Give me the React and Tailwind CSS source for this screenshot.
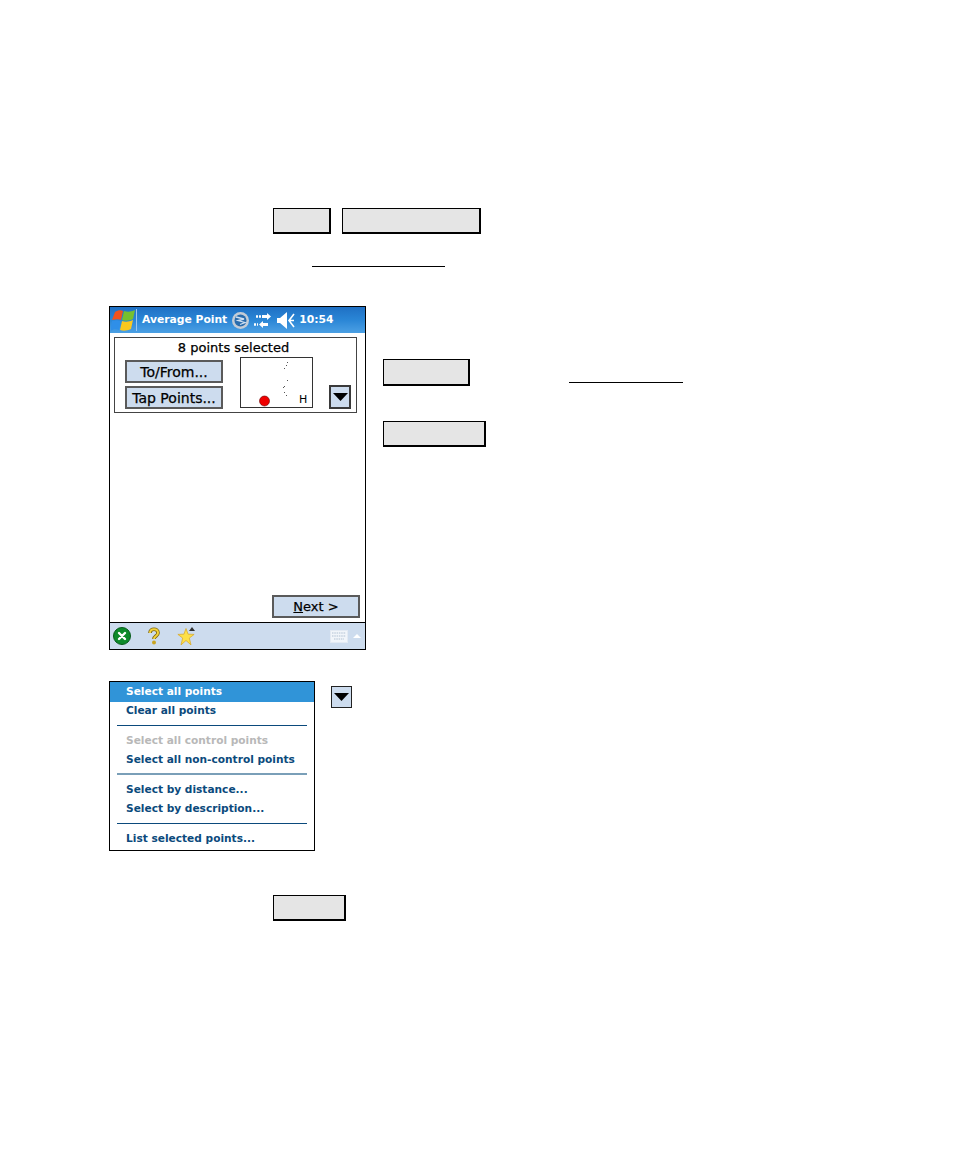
import React from 'react';

const font = { fontFamily: '"DejaVu Sans", Verdana, sans-serif' };

const Key = ({ className }) => (
  <div className={`h-[26px] bg-[#e5e5e5] border border-black border-r-2 border-b-2 ${className}`} />
);

const Rule = ({ className }) => <div className={`h-[1px] bg-black ${className}`} />;

const DeviceButton = ({ className, children }) => (
  <div className={`flex items-center justify-center bg-[#cddcee] border-2 border-[#5a5a5a] leading-none text-black ${className}`}>
    {children}
  </div>
);

const ArrowButton = ({ className }) => (
  <div className={`flex items-center justify-center bg-[#cddcee] border-[#3a3a3a] ${className}`}>
    <svg width="15" height="8" viewBox="0 0 15 8">
      <path d="M0 0h15L7.5 8z" fill="#000" />
    </svg>
  </div>
);

const WinFlag = () => (
  <svg width="24" height="23" viewBox="0 0 24 23">
    <path d="M4 3c3-2 6-2 8-1L10 11C8 10 5 10 1 11z" fill="#f0521e" />
    <path d="M13 2c3 1 7 1 11-1l-2 9c-4 2-8 2-11 1z" fill="#76c02e" />
    <path d="M1 12c3-1 6-1 9 0l-2 9c-3-1-5-1-9 1z" fill="#2f8fe8" />
    <path d="M11 12c3 1 7 1 11-1l-2 9c-4 2-8 2-11 1z" fill="#fbc81e" />
  </svg>
);

const StatusIcons = () => (
  <>
    <svg width="17" height="17" viewBox="0 0 17 17" className="ml-[5px]">
      <circle cx="8.500" cy="8.500" r="8.500" fill="#c4ccd6" />
      <circle cx="8.500" cy="8.500" r="6" fill="#2a6cad" />
      <path d="M4 5l8 2-6 1.500 7 2-5 2" stroke="#cfe0f2" strokeWidth="1.300" fill="none" />
    </svg>
    <svg width="17" height="15" viewBox="0 0 17 15" className="ml-[5px]">
      <path d="M8 2h5V0l4 3.500L13 7V5H8zM9 8v2h5v3H9v2l-4-3.500L9 8z" fill="#fff" />
      <path d="M2 3.500h5M0 11.500h4" stroke="#fff" strokeWidth="2.500" strokeDasharray="2 1" />
    </svg>
    <svg width="18" height="17" viewBox="0 0 18 17" className="ml-[6px]">
      <path d="M0 6h3l7-6v17l-7-6H0z" fill="#fff" />
      <path d="M17 2l-5 6.500 5 6.500M13 8.500h4" stroke="#fff" strokeWidth="1.600" fill="none" />
    </svg>
  </>
);

const PointMap = () => (
  <svg width="73" height="51" viewBox="0 0 73 51" className="ml-[17px] mt-[-3px] shrink-0">
    <rect x="0.500" y="0.500" width="72" height="50" fill="#fff" stroke="#333" />
    <g fill="#555">
      <rect x="47" y="5" width="1" height="1" />
      <rect x="46" y="8" width="1" height="1" />
      <rect x="44" y="11" width="1" height="1" />
      <rect x="47" y="23" width="1" height="1" />
      <rect x="44" y="29" width="1" height="1" />
      <rect x="43" y="30" width="1" height="1" />
      <rect x="44" y="35" width="1" height="1" />
      <rect x="46" y="38" width="1" height="1" />
    </g>
    <circle cx="24.500" cy="44" r="5" fill="#f00000" stroke="#600" strokeWidth="0.600" />
    <text x="59" y="46" fontSize="11" fill="#000" style={font}>H</text>
  </svg>
);

const Toolbar = () => (
  <div className="h-[27px] flex items-center bg-[#cddcee] border-t border-black pl-[3px] pr-[3px]">
    <svg width="18" height="18" viewBox="0 0 18 18">
      <circle cx="9" cy="9" r="8.500" fill="#0d8a2a" stroke="#075a1a" />
      <path d="M6 6l6 6M12 6l-6 6" stroke="#fff" strokeWidth="2.400" strokeLinecap="round" />
    </svg>
    <svg width="14" height="18" viewBox="0 0 14 18" className="ml-[16px]">
      <path d="M3 6c0-5 8-5 8 0 0 3-4 3-4 6" stroke="#7a6410" strokeWidth="3.600" fill="none" />
      <path d="M3 6c0-5 8-5 8 0 0 3-4 3-4 6" stroke="#f3d23a" strokeWidth="2" fill="none" />
      <circle cx="7" cy="15.500" r="2" fill="#c9a420" />
    </svg>
    <svg width="18" height="18" viewBox="0 0 18 18" className="ml-[16px]">
      <path d="M9 1.500L11.060 7.170 17.100 7.400 12.330 11.080 14 17.900 9 13.500 4 17.900 5.670 11.080 .9 7.400 6.940 7.170z" fill="#fde048" stroke="#d9a520" strokeWidth="0.700" />
      <path d="M12 4l3-4 3 4z" fill="#333" />
    </svg>
    <svg width="18" height="13" viewBox="0 0 18 13" className="ml-auto">
      <rect x="0.500" y="0.500" width="17" height="12" fill="#f1f5fa" stroke="#e3eaf3" />
      <path d="M2 3h14M2 6h14M4 9h10" stroke="#c6d2df" strokeWidth="1.400" strokeDasharray="1.500 0.800" />
    </svg>
    <svg width="8" height="4" viewBox="0 0 8 4" className="ml-[5px] mr-[1px]">
      <path d="M4 0l4 4H0z" fill="#fff" />
    </svg>
  </div>
);

const Device = () => (
  <div className="w-[257px] h-[344px] flex flex-col border border-black bg-white shrink-0" style={font}>
    <div className="h-[26px] flex items-center bg-gradient-to-b from-[#1f70c4] via-[#2a86d6] to-[#4ba0e4] text-white font-bold text-[10.750px] pl-[1px]">
      <WinFlag />
      <div className="w-[1px] h-[22px] bg-[#9cc6ee] ml-[1px] mr-[5px]" />
      <span>Average Point</span>
      <StatusIcons />
      <span className="ml-[4px]">10:54</span>
    </div>
    <div className="flex-1 flex flex-col pl-[4px] pr-[5px] pt-[4px] pb-[4px]">
      <div className="h-[76px] mr-[3px] border border-[#444] pl-[10px]">
        <div className="text-[13px] leading-[19px] text-black text-center ml-[-14px] [-webkit-text-stroke:0.25px_black]">8 points selected</div>
        <div className="flex mt-[3px]">
          <div className="flex flex-col gap-[3px] w-[98px] shrink-0 text-[14px] [-webkit-text-stroke:0.25px_black]">
            <DeviceButton className="h-[23px]">To/From...</DeviceButton>
            <DeviceButton className="h-[23px]">Tap Points...</DeviceButton>
          </div>
          <PointMap />
          <ArrowButton className="w-[22px] h-[24px] ml-[16px] mt-[25px] shrink-0 border-2" />
        </div>
      </div>
      <div className="mt-auto flex justify-end">
        <DeviceButton className="w-[88px] h-[23px] text-[13px] [-webkit-text-stroke:0.25px_black]">
          <span><span className="underline">N</span>ext &gt;</span>
        </DeviceButton>
      </div>
    </div>
    <Toolbar />
  </div>
);

const MenuItem = ({ active, disabled, children }) => (
  <div
    className={`h-[19.500px] flex items-center pl-[16px] text-[10.600px] font-bold ${
      active ? 'bg-[#3094d8] text-white' : disabled ? 'text-[#b8b8b8]' : 'text-[#0b4a7c]'
    }`}
  >
    {children}
  </div>
);

const MenuRule = ({ className }) => <div className={`mx-[7px] ${className}`} />;

const Menu = () => (
  <div className="w-[206px] h-[170px] flex flex-col border border-black bg-white shrink-0" style={font}>
    <MenuItem active>Select all points</MenuItem>
    <MenuItem>Clear all points</MenuItem>
    <MenuRule className="h-[1px] bg-[#0b4a7c] mt-[3.500px] mb-[5.500px]" />
    <MenuItem disabled>Select all control points</MenuItem>
    <MenuItem>Select all non-control points</MenuItem>
    <MenuRule className="h-[2px] bg-[#7a9fb8] mt-[3px] mb-[5px]" />
    <MenuItem>Select by distance...</MenuItem>
    <MenuItem>Select by description...</MenuItem>
    <MenuRule className="h-[1px] bg-[#0b4a7c] mt-[3.500px] mb-[5.500px]" />
    <MenuItem>List selected points...</MenuItem>
  </div>
);

export default function App() {
  return (
    <div className="w-[954px] h-[1158px] bg-white pt-[208px] overflow-hidden">
      <div className="flex pl-[273px] gap-[11px]">
        <Key className="w-[58px]" />
        <Key className="w-[139px]" />
      </div>
      <Rule className="w-[133px] ml-[312px] mt-[32px]" />
      <div className="flex pl-[109px] mt-[39px]">
        <Device />
        <div className="ml-[17px] pt-[53px]">
          <div className="flex items-end">
            <Key className="w-[87px] h-[27px]" />
            <Rule className="w-[114px] ml-[99px] mb-[3px]" />
          </div>
          <Key className="w-[103px] h-[25px] mt-[35px]" />
        </div>
      </div>
      <div className="flex pl-[109px] mt-[31px]">
        <Menu />
        <ArrowButton className="w-[21px] h-[22px] ml-[16px] mt-[5px] border border-[#222]" />
      </div>
      <Key className="w-[73px] ml-[273px] mt-[44px]" />
    </div>
  );
}
